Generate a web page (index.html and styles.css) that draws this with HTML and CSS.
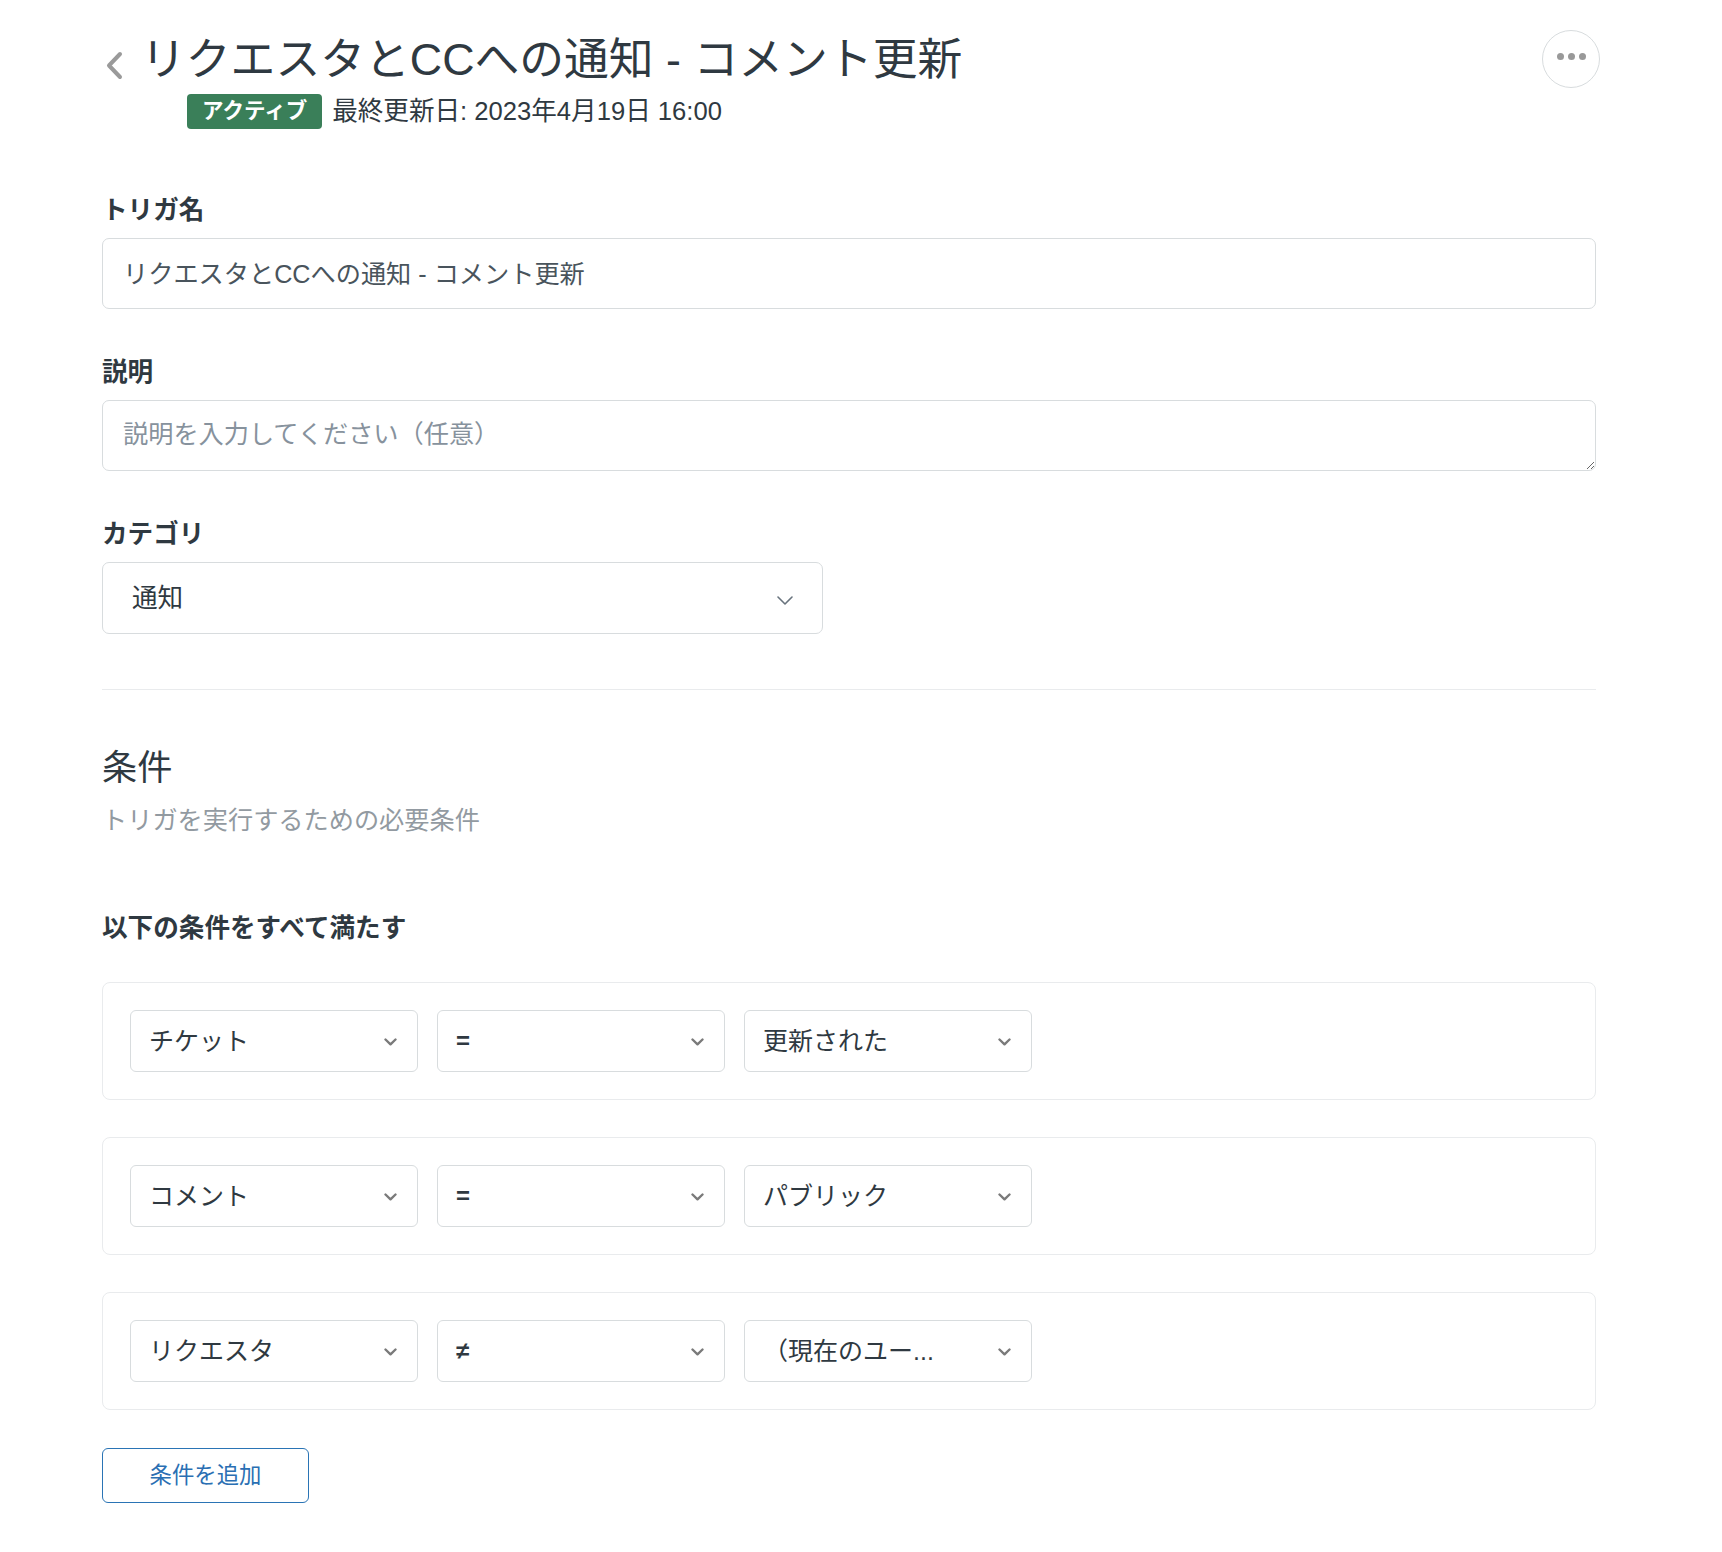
FILE: index.html
```html
<!DOCTYPE html>
<html lang="ja">
<head>
<meta charset="utf-8">
<title>トリガ編集</title>
<link rel="stylesheet" href="styles.css">
</head>
<body>
<div class="page">
  <header class="header">
    <div class="header-main">
      <div class="title-row">
        <svg class="back" viewBox="0 0 20 30" aria-hidden="true"><path d="M16 4 L5 15.5 L16 27" fill="none" stroke="#9a9a9a" stroke-width="4" stroke-linecap="round" stroke-linejoin="round"/></svg>
        <h1 class="title">リクエスタとCCへの通知 - コメント更新</h1>
      </div>
      <div class="meta-row">
        <span class="badge">アクティブ</span>
        <span class="meta">最終更新日: 2023年4月19日 16:00</span>
      </div>
    </div>
    <button class="more" type="button" aria-label="その他"><span class="dot"></span><span class="dot"></span><span class="dot"></span></button>
  </header>

  <main class="form">
    <div class="field">
      <label class="label">トリガ名</label>
      <input class="input" type="text" value="リクエスタとCCへの通知 - コメント更新">
    </div>
    <div class="field">
      <label class="label">説明</label>
      <textarea class="input textarea" placeholder="説明を入力してください（任意）"></textarea>
    </div>
    <div class="field">
      <label class="label">カテゴリ</label>
      <div class="select-lg">
        <span>通知</span>
        <svg class="chev-lg" viewBox="0 0 16 9" aria-hidden="true"><path d="M1 1 L8 8 L15 1" fill="none" stroke="#68737d" stroke-width="1.6" stroke-linecap="round" stroke-linejoin="round"/></svg>
      </div>
    </div>

    <hr class="divider">

    <h2 class="section-title">条件</h2>
    <p class="section-sub">トリガを実行するための必要条件</p>

    <div class="all-label">以下の条件をすべて満たす</div>

    <div class="cards">
      <div class="card">
        <div class="sel"><span>チケット</span><svg class="chev" viewBox="0 0 13 8"><path d="M1.5 1.5 L6.5 6.3 L11.5 1.5" fill="none" stroke="#7a7a7a" stroke-width="2.4" stroke-linecap="round" stroke-linejoin="round"/></svg></div>
        <div class="sel"><span class="op">=</span><svg class="chev" viewBox="0 0 13 8"><path d="M1.5 1.5 L6.5 6.3 L11.5 1.5" fill="none" stroke="#7a7a7a" stroke-width="2.4" stroke-linecap="round" stroke-linejoin="round"/></svg></div>
        <div class="sel"><span>更新された</span><svg class="chev" viewBox="0 0 13 8"><path d="M1.5 1.5 L6.5 6.3 L11.5 1.5" fill="none" stroke="#7a7a7a" stroke-width="2.4" stroke-linecap="round" stroke-linejoin="round"/></svg></div>
      </div>
      <div class="card">
        <div class="sel"><span>コメント</span><svg class="chev" viewBox="0 0 13 8"><path d="M1.5 1.5 L6.5 6.3 L11.5 1.5" fill="none" stroke="#7a7a7a" stroke-width="2.4" stroke-linecap="round" stroke-linejoin="round"/></svg></div>
        <div class="sel"><span class="op">=</span><svg class="chev" viewBox="0 0 13 8"><path d="M1.5 1.5 L6.5 6.3 L11.5 1.5" fill="none" stroke="#7a7a7a" stroke-width="2.4" stroke-linecap="round" stroke-linejoin="round"/></svg></div>
        <div class="sel"><span>パブリック</span><svg class="chev" viewBox="0 0 13 8"><path d="M1.5 1.5 L6.5 6.3 L11.5 1.5" fill="none" stroke="#7a7a7a" stroke-width="2.4" stroke-linecap="round" stroke-linejoin="round"/></svg></div>
      </div>
      <div class="card">
        <div class="sel"><span>リクエスタ</span><svg class="chev" viewBox="0 0 13 8"><path d="M1.5 1.5 L6.5 6.3 L11.5 1.5" fill="none" stroke="#7a7a7a" stroke-width="2.4" stroke-linecap="round" stroke-linejoin="round"/></svg></div>
        <div class="sel"><span class="op">≠</span><svg class="chev" viewBox="0 0 13 8"><path d="M1.5 1.5 L6.5 6.3 L11.5 1.5" fill="none" stroke="#7a7a7a" stroke-width="2.4" stroke-linecap="round" stroke-linejoin="round"/></svg></div>
        <div class="sel"><span>（現在のユー...</span><svg class="chev" viewBox="0 0 13 8"><path d="M1.5 1.5 L6.5 6.3 L11.5 1.5" fill="none" stroke="#7a7a7a" stroke-width="2.4" stroke-linecap="round" stroke-linejoin="round"/></svg></div>
      </div>
    </div>

    <button class="add-btn" type="button">条件を追加</button>
  </main>
</div>
</body>
</html>
```

FILE: styles.css
```css
html, body {
  margin: 0;
  padding: 0;
  background: #ffffff;
}

body {
  font-family: "Liberation Sans", "Noto Sans CJK JP", sans-serif;
  color: #2f3941;
}

.page {
  width: 1498px;
  padding: 30px 0 60px 102px;
}

/* Header */
.header {
  display: flex;
  justify-content: space-between;
  align-items: flex-start;
}

.title-row {
  display: flex;
  align-items: center;
  height: 58px;
}

.back {
  width: 20px;
  height: 30px;
  margin: 12px 17px 0 2px;
  flex: none;
}

.title {
  margin: 0;
  font-size: 44.8px;
  font-weight: 400;
  line-height: 54px;
  color: #2f3941;
  white-space: nowrap;
}

.meta-row {
  display: flex;
  align-items: center;
  gap: 10px;
  height: 35px;
  margin: 6px 0 0 85px;
}

.badge {
  background: #3a7f59;
  color: #ffffff;
  font-weight: 700;
  font-size: 21.5px;
  line-height: 35px;
  padding: 0 15px;
  border-radius: 4px;
}

.meta {
  font-size: 25.6px;
  line-height: 35px;
  color: #2f3941;
}

.more {
  width: 58px;
  height: 58px;
  border-radius: 50%;
  border: 1px solid #d8dcde;
  background: #ffffff;
  display: flex;
  align-items: center;
  justify-content: center;
  gap: 4px;
  padding: 0 0 5px 0;
  box-sizing: border-box;
}

.dot {
  width: 7px;
  height: 7px;
  border-radius: 50%;
  background: #999999;
}

/* Form */
.form {
  width: 1494px;
  margin-top: 63px;
}

.field {
  display: flex;
  flex-direction: column;
  gap: 10px;
}

.field + .field {
  margin-top: 45px;
}

.label {
  font-size: 25.6px;
  font-weight: 700;
  line-height: 36px;
  color: #2f3941;
}

.input {
  box-sizing: border-box;
  width: 100%;
  height: 71px;
  border: 1px solid #d8dcde;
  border-radius: 7px;
  padding: 0 20px 3px 20px;
  font-family: "Liberation Sans", "Noto Sans CJK JP", sans-serif;
  font-size: 25.2px;
  line-height: 36px;
  color: #49545c;
  background: #ffffff;
  outline: none;
}

.textarea {
  height: 71px;
  padding: 15px 20px 16px 20px;
  resize: vertical;
  display: block;
}

.textarea::placeholder {
  color: #87929d;
}

.select-lg {
  box-sizing: border-box;
  width: 721px;
  height: 72px;
  border: 1px solid #d8dcde;
  border-radius: 7px;
  display: flex;
  align-items: center;
  justify-content: space-between;
  padding: 0 29px 0 29px;
  font-size: 25.6px;
  line-height: 36px;
  color: #2f3941;
}

.chev-lg {
  width: 16px;
  height: 9px;
  margin-top: 4px;
}

.divider {
  border: 0;
  height: 1px;
  background: #e9ebed;
  margin: 55px 0 0 0;
}

.section-title {
  margin: 54px 0 0 0;
  font-size: 35.2px;
  font-weight: 400;
  line-height: 48px;
  color: #2f3941;
}

.section-sub {
  margin: 10px 0 0 0;
  font-size: 25.2px;
  line-height: 36px;
  color: #929aa1;
}

.all-label {
  margin-top: 72px;
  font-size: 25.6px;
  font-weight: 700;
  line-height: 36px;
  color: #2f3941;
}

.cards {
  margin-top: 36px;
  display: flex;
  flex-direction: column;
  gap: 37px;
}

.card {
  border: 1px solid #e9ebed;
  border-radius: 8px;
  padding: 27px;
  display: flex;
  gap: 19px;
}

.sel {
  box-sizing: border-box;
  width: 288px;
  height: 62px;
  border: 1px solid #d8dcde;
  border-radius: 6px;
  display: flex;
  align-items: center;
  justify-content: space-between;
  padding: 0 20px 0 18px;
  font-size: 25px;
  line-height: 36px;
  color: #2f3941;
  white-space: nowrap;
}

.op {
  font-weight: 700;
  font-size: 24px;
}

.chev {
  width: 13px;
  height: 8px;
  flex: none;
  margin-top: 2px;
}

.add-btn {
  display: block;
  margin-top: 38px;
  width: 207px;
  height: 55px;
  box-sizing: border-box;
  border: 1px solid #2a74b5;
  border-radius: 6px;
  background: #ffffff;
  color: #2a6fb3;
  font-family: "Liberation Sans", "Noto Sans CJK JP", sans-serif;
  font-size: 22.4px;
  line-height: 30px;
  padding: 0;
}
```
